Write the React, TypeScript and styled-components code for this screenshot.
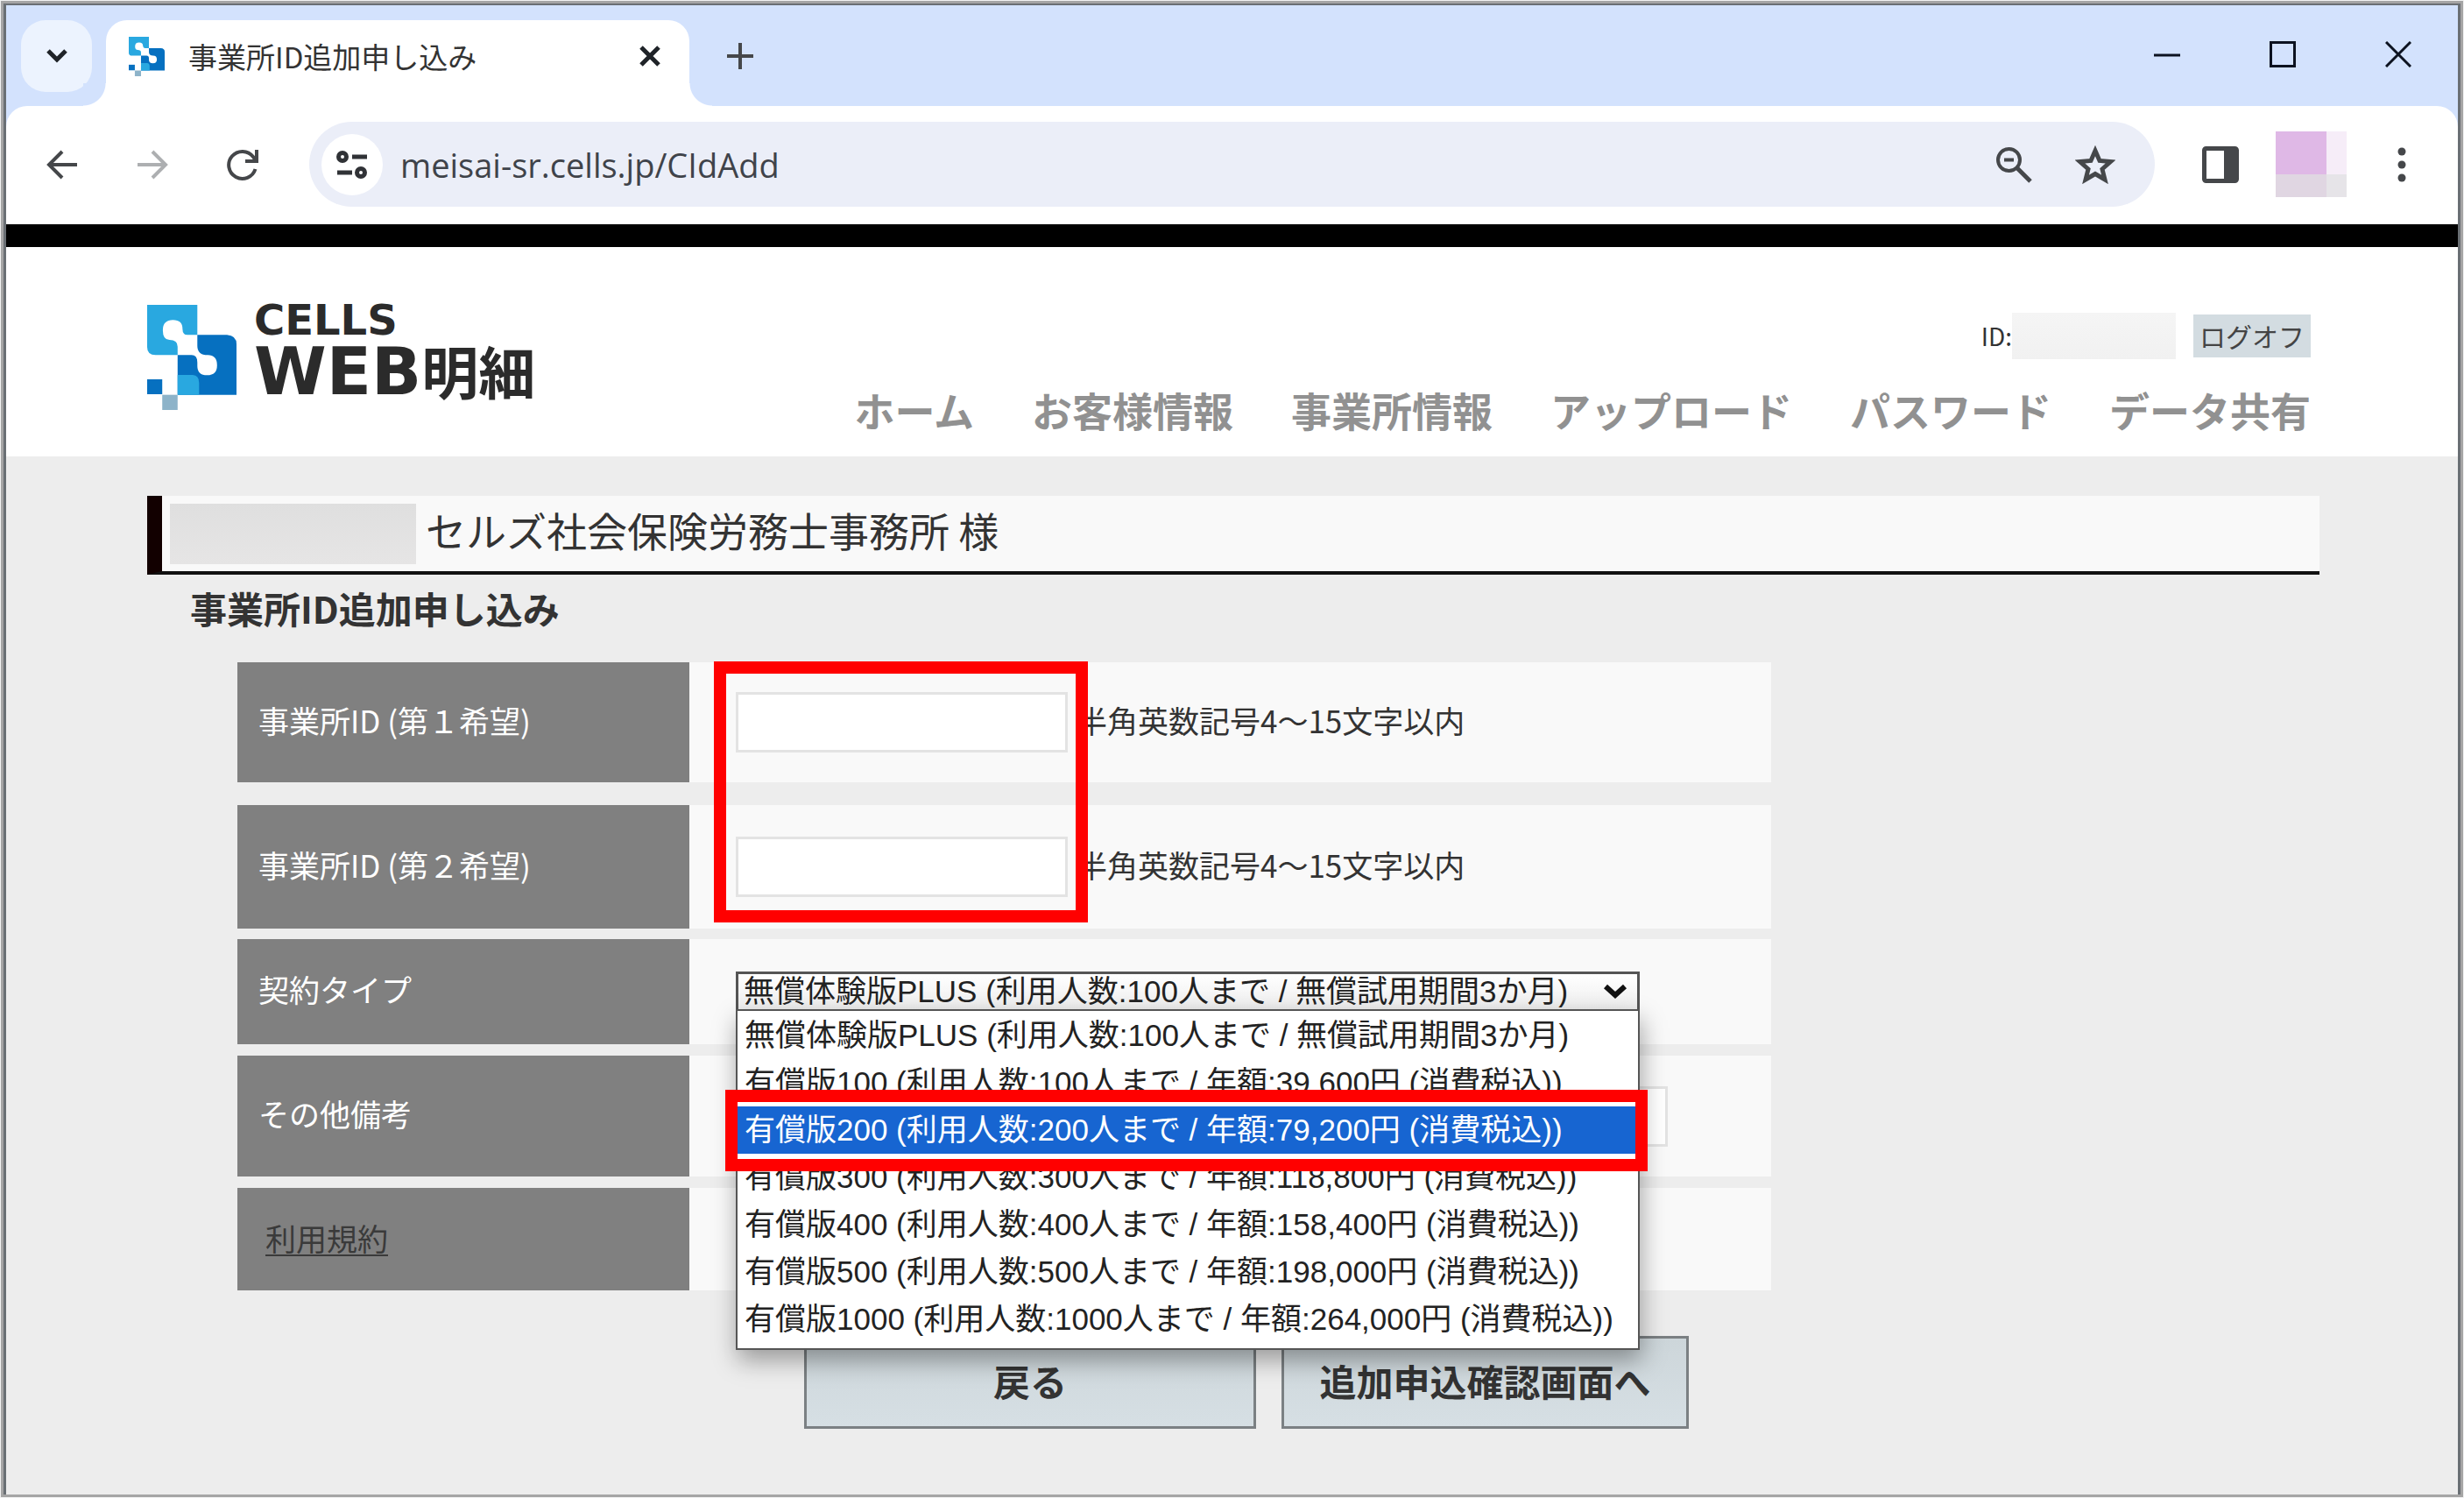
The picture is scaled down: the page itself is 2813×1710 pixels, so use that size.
import React, { useState } from "react";
import styled, { createGlobalStyle } from "styled-components";

const jp = `"Noto Sans CJK JP", sans-serif`;
const arial = `"Liberation Sans", "Noto Sans CJK JP", sans-serif`;

const Global = createGlobalStyle`
  *, *::before, *::after { box-sizing: border-box; }
  body { margin: 0; padding: 1px; background: #f2f2f2; color: #333; font-family: ${jp}; }
  button, input, select { margin: 0; padding: 0; border: 0; font: inherit; color: inherit; border-radius: 0; }
  h1, h2, p, ul { margin: 0; padding: 0; font-weight: 400; }
`;

const Window = styled.div`
  display: flex;
  flex-direction: column;
  min-height: calc(100vh - 2px);
  border: 3px solid #a5a5a5;
`;
const Frame = styled.div`
  flex: 1;
  display: flex;
  flex-direction: column;
  border: 3px solid #6a6f74;
  border-width: 2px 3px 0;
`;

/* ---------- browser chrome ---------- */
const TabStrip = styled.div`
  display: flex;
  align-items: flex-start;
  height: 115px;
  padding: 17px 38px 0 17px;
  background: #d3e2fd;
`;
const TabSearch = styled.button`
  display: grid;
  place-items: center;
  width: 81px;
  height: 82px;
  margin-right: 16px;
  border-radius: 28px;
  background: #ecf3fe;
`;
const Tab = styled.div`
  position: relative;
  display: flex;
  align-items: center;
  width: 666px;
  height: 98px;
  padding: 0 26px 16px 26px;
  border-radius: 24px 24px 0 0;
  background: #fff;
  &::before, &::after {
    content: "";
    position: absolute;
    bottom: 0;
    width: 26px;
    height: 26px;
  }
  &::before { right: 100%; background: radial-gradient(circle at 0 0, #d3e2fd 25px, #fff 26px); }
  &::after { left: 100%; background: radial-gradient(circle at 100% 0, #d3e2fd 25px, #fff 26px); }
`;
const TabTitle = styled.span`
  flex: 1;
  margin-left: 27px;
  font-size: 33px;
  line-height: 40px;
  white-space: nowrap;
`;
const IconButton = styled.button<{ $w?: number }>`
  display: grid;
  place-items: center;
  width: ${(p) => p.$w ?? 60}px;
  height: 82px;
  background: none;
  flex: none;
`;
const WindowControls = styled.div`
  display: flex;
  align-items: center;
  height: 78px;
  gap: 72px;
  margin-left: auto;
`;
const Toolbar = styled.div`
  display: flex;
  align-items: center;
  height: 135px;
  padding: 0 34px 2px;
  background: linear-gradient(#d3e2fd 30px, #fff 30px);
  position: relative;
  z-index: 0;
  &::before {
    content: "";
    position: absolute;
    inset: 0;
    z-index: -1;
    border-radius: 24px 24px 0 0;
    background: #fff;
  }
`;
const NavButtons = styled.div`
  display: flex;
  gap: 43px;
  margin-right: 46px;
`;
const Omnibox = styled.div`
  flex: 1;
  display: flex;
  align-items: center;
  height: 97px;
  padding: 0 38px 0 14px;
  border-radius: 49px;
  background: #ebeef8;
`;
const SiteInfo = styled.button`
  display: grid;
  place-items: center;
  width: 70px;
  height: 70px;
  border-radius: 50%;
  background: #fff;
`;
const Url = styled.input`
  flex: 1;
  min-width: 0;
  margin-left: 20px;
  background: none;
  font-family: "Open Sans", "Noto Sans", sans-serif;
  font-size: 38px;
  line-height: 52px;
  color: #3f434a;
`;
const OmniboxActions = styled.div`
  display: flex;
  gap: 30px;
`;
const ToolbarActions = styled.div`
  display: flex;
  align-items: center;
  margin-left: 24px;
`;
const Avatar = styled.button`
  display: grid;
  grid-template: 49px 26px / 58px 23px;
  margin: 0 33px 0 12px;
  & > span:nth-child(1) { background: #dfb8e6; }
  & > span:nth-child(2) { background: #f6edf8; }
  & > span:nth-child(3) { background: #e0d6e2; }
  & > span:nth-child(4) { background: #e6e4e8; }
`;

/* ---------- site header ---------- */
const Header = styled.header`
  display: flex;
  justify-content: space-between;
  padding: 66px 168px 0 161px;
  height: 265px;
  border-top: 26px solid #000;
  background: #fff;
`;
const Brand = styled.div`
  display: flex;
  gap: 20px;
`;
const Wordmark = styled.div`
  color: #2b2b2b;
  font-family: "DejaVu Sans", ${jp};
  font-weight: 700;
`;
const BrandTop = styled.div`
  font-size: 48px;
  line-height: 34px;
`;
const BrandBottom = styled.div`
  display: flex;
  align-items: baseline;
  font-size: 75px;
  line-height: 80px;
  & > span { font-family: ${jp}; font-size: 65px; }
`;
const HeaderRight = styled.div`
  display: flex;
  flex-direction: column;
  align-items: flex-end;
  justify-content: space-between;
  padding: 9px 0 20px;
`;
const Account = styled.div`
  display: flex;
  align-items: center;
  font-size: 28px;
  line-height: 53px;
`;
const Masked = styled.span<{ $w: number; $h: number; $from: string; $to: string }>`
  width: ${(p) => p.$w}px;
  height: ${(p) => p.$h}px;
  background: linear-gradient(${(p) => p.$from}, ${(p) => p.$to});
`;
const LogOff = styled.button`
  height: 49px;
  padding: 0 7px;
  margin-left: 20px;
  background: #d3dce1;
  font-size: 30px;
  line-height: 49px;
  color: #444;
`;
const Menu = styled.nav`
  display: flex;
  gap: 66px;
`;
const MenuLink = styled.a`
  color: #919191;
  font-size: 46px;
  font-weight: 700;
  line-height: 68px;
  text-decoration: none;
  white-space: nowrap;
`;

/* ---------- page ---------- */
const Main = styled.main`
  flex: 1;
  padding: 45px 158px 70px 161px;
  background: #ededed;
`;
const OfficeBar = styled.h1`
  display: flex;
  align-items: center;
  gap: 11px;
  height: 90px;
  padding-left: 9px;
  border-left: 17px solid #120000;
  border-bottom: 4px solid #111;
  background: #f9f9f9;
  font-size: 46px;
  line-height: 68px;
`;
const OfficeName = styled.span`
  padding-bottom: 10px;
`;
const Heading = styled.h2`
  margin: 7px 0 0 49px;
  font-size: 42px;
  font-weight: 700;
  line-height: 62px;
`;
const Form = styled.form`
  max-width: 1751px;
  margin: 31px 0 0 103px;
`;
const Rows = styled.div<{ $gap: number }>`
  position: relative;
  display: flex;
  flex-direction: column;
  gap: ${(p) => p.$gap}px;
  margin-bottom: 12px;
`;
const Row = styled.div<{ $h: number }>`
  display: flex;
  min-height: ${(p) => p.$h}px;
  background: #f9f9f9;
  font-size: 35px;
  line-height: 52px;
`;
const Label = styled.label`
  display: flex;
  align-items: center;
  width: 516px;
  flex: none;
  padding: 0 0 6px 24px;
  background: #808080;
  color: #fff;
`;
const TermsCell = styled(Label).attrs({ as: "div" })`
  padding: 0 0 3px 32px;
`;
const TermsLink = styled.a`
  color: #3a3a3a;
  text-underline-offset: 4px;
  text-decoration-thickness: 2px;
`;
const Field = styled.div`
  flex: 1;
  display: flex;
  align-items: center;
  gap: 10px;
  padding-left: 53px;
`;
const Hint = styled.span`
  padding-bottom: 6px;
`;
const TextBox = styled.input<{ $w: number }>`
  width: ${(p) => p.$w}px;
  height: 69px;
  padding: 0 12px;
  border: 3px solid #e3e3e3;
  background: #fff;
`;
const PlanPicker = styled.div`
  position: relative;
  width: 1032px;
  font-family: ${arial};
  font-size: 35px;
  line-height: 40px;
  color: #222;
`;
const PlanSelect = styled.select`
  display: block;
  width: 100%;
  height: 46px;
  padding: 0 60px 2px 6px;
  appearance: none;
  border: 3px solid #555;
  background: linear-gradient(#fff, #eee);
`;
const Caret = styled.svg`
  position: absolute;
  right: 14px;
  top: 14px;
  pointer-events: none;
`;
const Options = styled.ul`
  position: absolute;
  z-index: 1;
  top: 43px;
  left: 0;
  width: 100%;
  padding: 1px 0 6px;
  border: 2px solid #555;
  background: #fff;
  box-shadow: 2px 12px 26px rgba(0, 0, 0, 0.35);
  list-style: none;
`;
const Option = styled.li<{ $active: boolean }>`
  position: relative;
  padding-left: 8px;
  line-height: 54px;
  white-space: nowrap;
  background: ${(p) => (p.$active ? "#1765d1" : "#fff")};
  color: ${(p) => (p.$active ? "#fff" : "#222")};
`;
const Highlight = styled.span`
  position: absolute;
  z-index: 2;
  inset: -19px -11px -20px -14px;
  border: 14px solid #f00;
  pointer-events: none;
`;
const IdHighlight = styled.div`
  position: absolute;
  top: -1px;
  bottom: 7px;
  left: 544px;
  width: 427px;
  border: 14px solid #f00;
  pointer-events: none;
`;
const Actions = styled.div`
  display: flex;
  gap: 29px;
  margin: 52px 0 0 647px;
`;
const ActionButton = styled.button<{ $w: number }>`
  width: ${(p) => p.$w}px;
  flex: none;
  height: 106px;
  padding-bottom: 4px;
  border: 3px solid #7b8083;
  background: linear-gradient(#cdd6da, #d6dfe4);
  font-size: 42px;
  font-weight: 700;
  line-height: 62px;
  white-space: nowrap;
`;

function CellsMark({ w, h }: { w: number; h: number }) {
  return (
    <svg width={w} height={h} viewBox="83 85 308 360" preserveAspectRatio="none" aria-hidden="true">
      <path fill="#29a8e0" d="M83 85H256V188H222Q205 187 205 168Q205 137 172 137Q137 137 137 172Q137 205 160 205Q188 205 188 228V257H112Q83 257 83 230Z" />
      <path fill="#0670c0" d="M256 188H358Q391 190 391 220V393H188V257H236Q256 257 256 282V294Q256 326 290 326Q324 326 324 292Q324 257 292 257Q256 257 256 225Z" />
      <path fill="#29a8e0" d="M188 325H240Q262 327 262 352V393H188Z" />
      <path fill="#0670c0" d="M83 340H135V391H83Z" />
      <path fill="#8db3c9" d="M135 393H188V445H135Z" />
    </svg>
  );
}

const stroke = { fill: "none", stroke: "#45474a", strokeWidth: 4 } as const;

const plans = [
  "無償体験版PLUS (利用人数:100人まで / 無償試用期間3か月)",
  "有償版100 (利用人数:100人まで / 年額:39,600円 (消費税込))",
  "有償版200 (利用人数:200人まで / 年額:79,200円 (消費税込))",
  "有償版300 (利用人数:300人まで / 年額:118,800円 (消費税込))",
  "有償版400 (利用人数:400人まで / 年額:158,400円 (消費税込))",
  "有償版500 (利用人数:500人まで / 年額:198,000円 (消費税込))",
  "有償版1000 (利用人数:1000人まで / 年額:264,000円 (消費税込))",
];
const menu = ["ホーム", "お客様情報", "事業所情報", "アップロード", "パスワード", "データ共有"];

function BrowserChrome() {
  return (
    <>
      <TabStrip>
        <TabSearch aria-label="タブを検索">
          <svg width="26" height="18" viewBox="0 0 26 18"><path d="M3 3L13 13L23 3" fill="none" stroke="#1f2328" strokeWidth="5" /></svg>
        </TabSearch>
        <Tab>
          <CellsMark w={41} h={45} />
          <TabTitle>事業所ID追加申し込み</TabTitle>
          <IconButton $w={38} aria-label="タブを閉じる">
            <svg width="26" height="24" viewBox="0 0 26 24"><path d="M3 2L23 22M23 2L3 22" fill="none" stroke="#1f2328" strokeWidth="5" /></svg>
          </IconButton>
        </Tab>
        <IconButton $w={116} aria-label="新しいタブ">
          <svg width="30" height="30" viewBox="0 0 30 30"><path d="M15 0V30M0 15H30" {...stroke} /></svg>
        </IconButton>
        <WindowControls>
          <IconButton aria-label="最小化">
            <svg width="30" height="30" viewBox="0 0 30 30"><path d="M0 16H30" fill="none" stroke="#0c1220" strokeWidth="3" /></svg>
          </IconButton>
          <IconButton aria-label="最大化">
            <svg width="30" height="30" viewBox="0 0 30 30"><rect x="1.5" y="1.5" width="27" height="27" fill="none" stroke="#0c1220" strokeWidth="3" /></svg>
          </IconButton>
          <IconButton aria-label="閉じる">
            <svg width="30" height="30" viewBox="0 0 30 30"><path d="M1 1L29 29M29 1L1 29" fill="none" stroke="#0c1220" strokeWidth="3" /></svg>
          </IconButton>
        </WindowControls>
      </TabStrip>
      <Toolbar>
        <NavButtons>
          <IconButton aria-label="戻る">
            <svg width="36" height="34" viewBox="0 0 36 34"><path d="M18 2L3 17L18 32M3 17H35" {...stroke} /></svg>
          </IconButton>
          <IconButton aria-label="進む">
            <svg width="36" height="34" viewBox="0 0 36 34"><path d="M18 2L33 17L18 32M33 17H1" {...stroke} stroke="#adafb1" /></svg>
          </IconButton>
          <IconButton aria-label="再読み込み">
            <svg width="38" height="38" viewBox="0 0 38 38"><path d="M33.5 24A15.500 15.500 0 1 1 31 10L34 14M35 2V15H22" {...stroke} /></svg>
          </IconButton>
        </NavButtons>
        <Omnibox>
          <SiteInfo aria-label="サイト情報">
            <svg width="36" height="34" viewBox="0 0 36 34" fill="none" stroke="#303236" strokeWidth="5">
              <circle cx="7" cy="8" r="4.500" /><path d="M18 8H35" /><circle cx="28" cy="26" r="4.500" /><path d="M1 26H18" />
            </svg>
          </SiteInfo>
          <Url aria-label="アドレス" defaultValue="meisai-sr.cells.jp/CIdAdd" />
          <OmniboxActions>
            <IconButton $w={66} aria-label="ズーム">
              <svg width="42" height="42" viewBox="0 0 42 42"><circle cx="15.500" cy="15.500" r="12.500" {...stroke} /><path d="M25 25L40 40" {...stroke} strokeWidth="5" /><path d="M10 15.500H21" {...stroke} /></svg>
            </IconButton>
            <IconButton aria-label="ブックマーク">
              <svg width="46" height="44" viewBox="0 0 46 44"><path d="M23 6L28 17.500L40.500 18.600L31 27L34 39L23 32.500L12 39L15 27L5.500 18.600L18 17.500Z" {...stroke} strokeWidth={5} /></svg>
            </IconButton>
          </OmniboxActions>
        </Omnibox>
        <ToolbarActions>
          <IconButton $w={102} aria-label="サイドパネル">
            <svg width="42" height="42" viewBox="0 0 42 42"><rect x="2.500" y="2.500" width="37" height="37" rx="2" fill="none" stroke="#45474a" strokeWidth="5" /><path d="M25 3H40V39H25Z" fill="#45474a" /></svg>
          </IconButton>
          <Avatar aria-label="プロフィール"><span /><span /><span /><span /></Avatar>
          <IconButton aria-label="メニュー">
            <svg width="10" height="40" viewBox="0 0 10 40" fill="#45474a"><circle cx="5" cy="5" r="4.500" /><circle cx="5" cy="20" r="4.500" /><circle cx="5" cy="35" r="4.500" /></svg>
          </IconButton>
        </ToolbarActions>
      </Toolbar>
    </>
  );
}

export default function App() {
  const [plan, setPlan] = useState(0);
  return (
    <>
      <Global />
      <Window>
        <Frame>
          <BrowserChrome />
          <Header>
            <Brand>
              <CellsMark w={102} h={120} />
              <Wordmark>
                <BrandTop>CELLS</BrandTop>
                <BrandBottom>WEB<span>明細</span></BrandBottom>
              </Wordmark>
            </Brand>
            <HeaderRight>
              <Account>
                ID:
                <Masked $w={187} $h={53} $from="#f5f5f5" $to="#f1f1f1" />
                <LogOff>ログオフ</LogOff>
              </Account>
              <Menu>
                {menu.map((m) => <MenuLink key={m} href="#">{m}</MenuLink>)}
              </Menu>
            </HeaderRight>
          </Header>
          <Main>
            <OfficeBar>
              <Masked $w={281} $h={69} $from="#dfdfdf" $to="#e6e5e5" />
              <OfficeName>セルズ社会保険労務士事務所 様</OfficeName>
            </OfficeBar>
            <Heading>事業所ID追加申し込み</Heading>
            <Form onSubmit={(e) => e.preventDefault()}>
              <Rows $gap={26}>
                <Row $h={137}>
                  <Label htmlFor="id1">事業所ID (第１希望)</Label>
                  <Field><TextBox id="id1" $w={379} /><Hint>半角英数記号4～15文字以内</Hint></Field>
                </Row>
                <Row $h={141}>
                  <Label htmlFor="id2">事業所ID (第２希望)</Label>
                  <Field><TextBox id="id2" $w={379} /><Hint>半角英数記号4～15文字以内</Hint></Field>
                </Row>
                <IdHighlight />
              </Rows>
              <Rows $gap={13}>
                <Row $h={120}>
                  <Label htmlFor="plan">契約タイプ</Label>
                  <Field>
                    <PlanPicker>
                      <PlanSelect id="plan" value={plan} onChange={(e) => setPlan(Number(e.target.value))}>
                        {plans.map((p, i) => <option key={p} value={i}>{p}</option>)}
                      </PlanSelect>
                      <Caret width="28" height="18" viewBox="0 0 28 18"><path d="M3 3L14 13L25 3" fill="none" stroke="#111" strokeWidth="6" /></Caret>
                      <Options role="listbox" aria-label="契約タイプ">
                        {plans.map((p, i) => (
                          <Option key={p} role="option" aria-selected={i === 2} $active={i === 2} onClick={() => setPlan(i)}>
                            {p}
                            {i === 2 && <Highlight />}
                          </Option>
                        ))}
                      </Options>
                    </PlanPicker>
                  </Field>
                </Row>
                <Row $h={138}>
                  <Label htmlFor="note">その他備考</Label>
                  <Field><TextBox id="note" $w={1064} /></Field>
                </Row>
                <Row $h={117}>
                  <TermsCell><TermsLink href="#">利用規約</TermsLink></TermsCell>
                  <Field />
                </Row>
              </Rows>
              <Actions>
                <ActionButton $w={516} type="button">戻る</ActionButton>
                <ActionButton $w={465} type="submit">追加申込確認画面へ</ActionButton>
              </Actions>
            </Form>
          </Main>
        </Frame>
      </Window>
    </>
  );
}
